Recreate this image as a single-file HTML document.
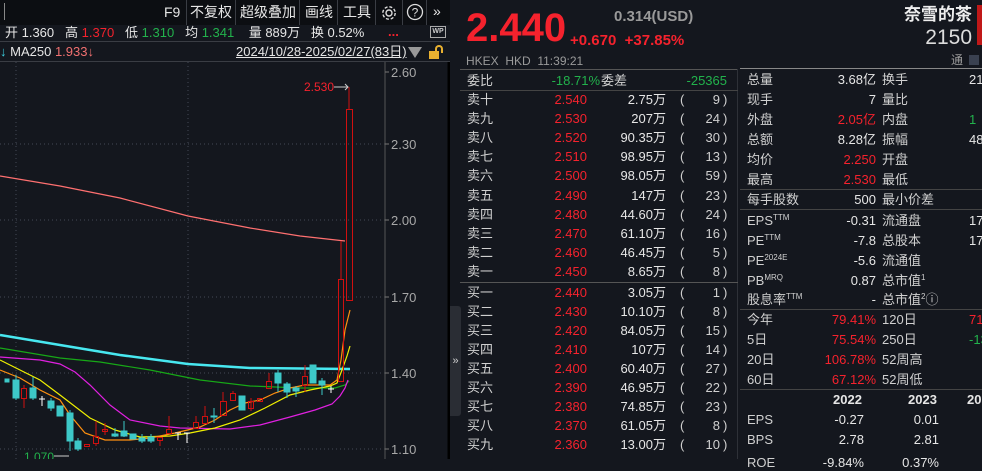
<!DOCTYPE html>
<html><head><meta charset="utf-8"><style>
*{margin:0;padding:0;box-sizing:border-box}
body{width:982px;height:459px;overflow:hidden;background:#14171e;font-family:"Liberation Sans","Noto Sans CJK SC",sans-serif;font-size:13px;color:#d0d0d0;position:relative}
.a{position:absolute;white-space:nowrap;line-height:16px}
.r{color:#f5222d}.g{color:#22b24c}.w{color:#e6e6e6}.gy{color:#9a9a9a}
.hl{position:absolute;height:1px;background:#3a3d44}
.vl{position:absolute;width:1px;background:#3a3d44}
.rt{text-align:right}
.sp{font-size:8px;position:relative;top:-5px;line-height:0}
.tb{font-size:14px}
</style></head><body>
<div class="a" style="left:0;top:0;width:450px;height:25px;background:#0c0e12"></div>
<div class="vl" style="left:4px;top:3px;height:17px;background:#888"></div>
<div class="a w tb" style="left:164px;top:4px">F9</div>
<div class="vl" style="left:186px;top:0;height:25px"></div>
<div class="a w tb" style="left:190px;top:4px">不复权</div>
<div class="vl" style="left:235px;top:0;height:25px"></div>
<div class="a w tb" style="left:240px;top:4px">超级叠加</div>
<div class="vl" style="left:299px;top:0;height:25px"></div>
<div class="a w tb" style="left:305px;top:4px">画线</div>
<div class="vl" style="left:337px;top:0;height:25px"></div>
<div class="a w tb" style="left:343px;top:4px">工具</div>
<div class="vl" style="left:375px;top:0;height:25px"></div>
<svg class="a" style="left:380px;top:4px" width="18" height="18" viewBox="0 0 18 18"><circle cx="9" cy="9" r="3" fill="none" stroke="#ddd" stroke-width="1.4"/><circle cx="9" cy="9" r="6.2" fill="none" stroke="#ddd" stroke-width="1.4" stroke-dasharray="3 1.9"/></svg>
<div class="vl" style="left:402px;top:0;height:25px"></div>
<svg class="a" style="left:406px;top:3px" width="18" height="18" viewBox="0 0 18 18"><circle cx="9" cy="9" r="7.5" fill="none" stroke="#ddd" stroke-width="1.3"/><text x="9" y="13.5" font-size="12" fill="#ddd" text-anchor="middle" font-family="Liberation Sans">?</text></svg>
<div class="vl" style="left:426px;top:0;height:25px"></div>
<div class="a w" style="left:433px;top:3px;font-size:14px">»</div>
<div class="a" style="left:5px;top:25px;font-size:13px"><span class="w">开 1.360</span>&nbsp;&nbsp; <span class="w">高</span> <span class="r">1.370</span>&nbsp;&nbsp; <span class="w">低</span> <span class="g">1.310</span>&nbsp;&nbsp; <span class="w">均</span> <span class="g">1.341</span>&nbsp;&nbsp;&nbsp; <span class="w">量 889万</span>&nbsp;&nbsp; <span class="w">换 0.52%</span></div>
<div class="a r" style="left:388px;top:24px;font-weight:bold">...</div>
<div class="a" style="left:430px;top:26px;width:16px;height:12px;border:1px solid #aaa;font-size:7px;line-height:10px;text-align:center;color:#ccc;font-weight:bold">WP</div>
<div class="hl" style="left:0;top:41px;width:450px"></div>
<div class="a" style="left:0;top:44px"><span style="color:#3cd0e0">↓</span> <span class="w">MA250</span> <span style="color:#f07070">1.933↓</span></div>
<div class="a w" style="left:236px;top:44px;text-decoration:underline">2024/10/28-2025/02/27(83日)</div>
<div class="a" style="left:408px;top:47px;width:0;height:0;border-left:7px solid transparent;border-right:7px solid transparent;border-top:11px solid #999"></div>
<div class="a" style="left:429px;top:51px;width:10px;height:8px;background:#e8b030"></div>
<div class="a" style="left:432px;top:45px;width:8px;height:8px;border:2px solid #e8b030;border-bottom:none;border-radius:4px 4px 0 0;margin-left:3px"></div>
<div class="hl" style="left:0;top:61px;width:450px"></div>
<svg class="a" style="left:0;top:62px" width="450" height="397" viewBox="0 62 450 397">
<g stroke="#444a55" stroke-dasharray="1 3" stroke-width="1">
<line x1="0" y1="144" x2="385" y2="144"/><line x1="0" y1="220" x2="385" y2="220"/><line x1="0" y1="297" x2="385" y2="297"/><line x1="0" y1="373" x2="385" y2="373"/><line x1="0" y1="449" x2="385" y2="449"/>
<line x1="16" y1="62" x2="16" y2="459"/><line x1="188" y1="62" x2="188" y2="459"/>
</g>
<line x1="385" y1="62" x2="385" y2="459" stroke="#555"/>
<g stroke="#777"><line x1="385" y1="72" x2="389" y2="72"/><line x1="385" y1="144" x2="389" y2="144"/><line x1="385" y1="220" x2="389" y2="220"/><line x1="385" y1="297" x2="389" y2="297"/><line x1="385" y1="373" x2="389" y2="373"/><line x1="385" y1="449" x2="389" y2="449"/></g>
<g fill="#a8a8a8" font-size="13" font-family="Liberation Sans"><text x="391" y="77">2.60</text><text x="391" y="149">2.30</text><text x="391" y="225">2.00</text><text x="391" y="302">1.70</text><text x="391" y="378">1.40</text><text x="391" y="454">1.10</text></g>
<line x1="449" y1="62" x2="449" y2="459" stroke="#000" stroke-width="3"/>
<polyline fill="none" stroke="#ff7070" stroke-width="1.2" points="0,176 60,186 120,198 188,216 250,228 300,236 345,241"/>
<polyline fill="none" stroke="#48e8f0" stroke-width="2.5" points="0,335 60,345 120,355 188,364 250,368 350,369"/>
<polyline fill="none" stroke="#17a817" stroke-width="1.2" points="0,348 60,358 100,362 150,370 200,380 250,386 300,388 335,388 345,385 349,381"/>
<polyline fill="none" stroke="#e020e0" stroke-width="1.2" points="0,357 40,360 60,364 75,372 90,385 110,405 130,420 160,426 180,428 230,429 260,425 290,417 315,410 332,404 340,396 345,388 348,380"/>
<polyline fill="none" stroke="#f0f000" stroke-width="1.2" points="0,360 20,370 40,380 60,395 90,418 115,430 140,437 170,436 190,433 215,428 240,420 265,408 290,395 310,390 330,386 337,383 342,370 347,356 350,346"/>
<polyline fill="none" stroke="#ff9010" stroke-width="1.2" points="0,370 20,378 40,390 60,400 70,415 85,433 105,440 130,440 150,438 175,433 200,427 215,420 230,410 245,403 260,400 275,393 290,388 305,385 330,385 337,380 341,360 345,330 350,310"/>
<g stroke-width="1">
<g fill="#3dc8c8" stroke="#3dc8c8">
<rect x="5" y="379" width="4" height="3"/><rect x="13" y="380" width="6" height="18"/><line x1="16" y1="375" x2="16" y2="400"/>
<rect x="30" y="388" width="6" height="10"/><line x1="33" y1="377" x2="33" y2="400"/>
<rect x="48" y="401" width="6" height="7"/><line x1="51" y1="398" x2="51" y2="411"/>
<rect x="57" y="406" width="6" height="10"/>
<rect x="67" y="413" width="6" height="28"/><line x1="70" y1="410" x2="70" y2="451"/>
<rect x="75" y="441" width="6" height="8"/><line x1="78" y1="438" x2="78" y2="451"/>
<rect x="112" y="434" width="6" height="2"/><line x1="115" y1="428" x2="115" y2="437"/>
<rect x="121" y="431" width="6" height="5"/><line x1="124" y1="421" x2="124" y2="437"/>
<rect x="130" y="434" width="6" height="5"/>
<rect x="139" y="438" width="6" height="3"/><line x1="142" y1="434" x2="142" y2="443"/>
<rect x="148" y="437" width="6" height="4"/><line x1="151" y1="434" x2="151" y2="443"/>
<rect x="211" y="416" width="6" height="1"/><line x1="214" y1="408" x2="214" y2="423"/>
<rect x="239" y="396" width="6" height="14"/>
<rect x="275" y="373" width="6" height="10"/><line x1="278" y1="370" x2="278" y2="392"/>
<rect x="284" y="384" width="6" height="8"/><line x1="287" y1="382" x2="287" y2="398"/>
<rect x="293" y="388" width="6" height="3"/><line x1="296" y1="386" x2="296" y2="397"/>
<rect x="310" y="365" width="6" height="18"/>
<rect x="319" y="381" width="6" height="4"/><line x1="322" y1="378" x2="322" y2="395"/>
</g>
<g fill="none" stroke="#d01010">
<rect x="21.5" y="388.5" width="5" height="10"/><line x1="24" y1="385" x2="24" y2="388"/><line x1="24" y1="399" x2="24" y2="408"/>
<rect x="84.5" y="444.5" width="5" height="2"/>
<rect x="93.5" y="436.5" width="5" height="7"/><line x1="96" y1="421" x2="96" y2="436"/><line x1="96" y1="444" x2="96" y2="446"/>
<rect x="102.5" y="429.5" width="5" height="2"/><line x1="105" y1="423" x2="105" y2="435"/>
<rect x="157.5" y="437.5" width="5" height="3"/><line x1="160" y1="440" x2="160" y2="446"/>
<rect x="166.5" y="429.5" width="5" height="4"/><line x1="169" y1="416" x2="169" y2="429"/>
<rect x="193.5" y="422.5" width="5" height="6"/><line x1="196" y1="416" x2="196" y2="422"/>
<rect x="202.5" y="416.5" width="5" height="7"/><line x1="205" y1="406" x2="205" y2="416"/>
<rect x="220.5" y="401.5" width="6" height="14"/><line x1="223" y1="392" x2="223" y2="401"/>
<rect x="230.5" y="393.5" width="5" height="7"/><line x1="233" y1="391" x2="233" y2="393"/>
<rect x="248.5" y="401.5" width="5" height="7"/><line x1="251" y1="398" x2="251" y2="411"/>
<rect x="257.5" y="398.5" width="5" height="3"/>
<rect x="266.5" y="381.5" width="5" height="7"/><line x1="269" y1="373" x2="269" y2="381"/>
<rect x="302.5" y="376.5" width="5" height="9"/><line x1="305" y1="365" x2="305" y2="376"/><line x1="305" y1="386" x2="305" y2="392"/>
<rect x="338.5" y="279.5" width="5" height="102"/><line x1="341" y1="241" x2="341" y2="279"/>
<rect x="346.5" y="109.5" width="6" height="191"/><line x1="349" y1="87" x2="349" y2="109"/>
</g>
<g stroke="#fff"><line x1="39" y1="399" x2="45" y2="399"/><line x1="42" y1="396" x2="42" y2="406"/>
<line x1="175" y1="433" x2="181" y2="433"/><line x1="178" y1="433" x2="178" y2="440"/>
<line x1="184" y1="433" x2="190" y2="433"/><line x1="187" y1="433" x2="187" y2="443"/>
<line x1="328" y1="389" x2="334" y2="389"/><line x1="331" y1="386" x2="331" y2="393"/></g>
</g>
<text x="304" y="91" fill="#f5222d" font-size="12" font-family="Liberation Sans">2.530</text>
<line x1="334" y1="87" x2="348" y2="87" stroke="#ccc"/><polyline points="345,84 348,87 345,90" fill="none" stroke="#ccc"/>
<text x="24" y="461" fill="#22b24c" font-size="12" font-family="Liberation Sans">1.070</text>
<line x1="54" y1="456" x2="69" y2="456" stroke="#ccc"/>
</svg>
<div class="a" style="left:450px;top:306px;width:11px;height:110px;background:#2a2d34;border-radius:0 3px 3px 0;color:#ccc;font-size:11px;line-height:110px;text-align:center">»</div>
<div class="a r" style="left:466px;top:6px;font-size:40px;line-height:44px;font-weight:bold">2.440</div>
<div class="a gy" style="left:614px;top:8px;font-size:15px;line-height:18px;font-weight:bold">0.314(USD)</div>
<div class="a r" style="left:570px;top:32px;font-size:15px;line-height:18px;font-weight:bold">+0.670&nbsp; +37.85%</div>
<div class="a gy" style="left:466px;top:53px;font-size:12px">HKEX&nbsp; HKD&nbsp; 11:39:21</div>
<div class="hl" style="left:460px;top:69px;width:278px;background:#555"></div>
<div class="vl" style="left:737px;top:69px;height:390px;background:#2e3138"></div>
<div class="a" style="left:467px;top:73px">委比</div>
<div class="a g rt" style="left:520px;top:73px;width:80px">-18.71%</div>
<div class="a" style="left:601px;top:73px">委差</div>
<div class="a g rt" style="left:650px;top:73px;width:77px">-25365</div>
<div class="hl" style="left:460px;top:90px;width:278px;background:#444"></div>
<div id="ob"></div>
<div class="hl" style="left:460px;top:282px;width:278px;background:#555"></div>
<div class="a" style="left:850px;top:4px;font-size:17px;line-height:22px;font-weight:bold;color:#eee;width:122px;text-align:right">奈雪的茶</div>
<div class="a" style="left:850px;top:26px;font-size:21px;line-height:24px;color:#ddd;width:122px;text-align:right">2150</div>
<div class="a" style="left:977px;top:5px;width:5px;height:40px;background:#c01818"></div>
<div class="a gy" style="left:951px;top:52px;font-size:12px">通</div>
<div class="a" style="left:969px;top:55px;width:10px;height:10px;background:#3a4150"></div>
<div class="hl" style="left:740px;top:68px;width:242px;background:#888"></div>
<div id="rp"></div>
<script>
var ob=[["卖十","2.540","2.75万","9"],["卖九","2.530","207万","24"],["卖八","2.520","90.35万","30"],["卖七","2.510","98.95万","13"],["卖六","2.500","98.05万","59"],["卖五","2.490","147万","23"],["卖四","2.480","44.60万","24"],["卖三","2.470","61.10万","16"],["卖二","2.460","46.45万","5"],["卖一","2.450","8.65万","8"],
["买一","2.440","3.05万","1"],["买二","2.430","10.10万","8"],["买三","2.420","84.05万","15"],["买四","2.410","107万","14"],["买五","2.400","60.40万","27"],["买六","2.390","46.95万","22"],["买七","2.380","74.85万","23"],["买八","2.370","61.05万","8"],["买九","2.360","13.00万","10"]];
var h="";ob.forEach(function(r,i){var y=i<10?92+i*19.1:285+(i-10)*19;
h+='<div class="a" style="left:467px;top:'+y+'px">'+r[0]+'</div><div class="a r rt" style="left:530px;top:'+y+'px;width:57px">'+r[1]+'</div><div class="a w rt" style="left:600px;top:'+y+'px;width:66px">'+r[2]+'</div><div class="a" style="left:680px;top:'+y+'px">(</div><div class="a rt" style="left:690px;top:'+y+'px;width:30px">'+r[3]+'</div><div class="a" style="left:723px;top:'+y+'px">)</div>';});
document.getElementById("ob").outerHTML=h;
var rp=[["总量","3.68亿","","换手","21",""],["现手","7","","量比","",""],["外盘","2.05亿","r","内盘","1","g"],["总额","8.28亿","","振幅","48",""],["均价","2.250","r","开盘","",""],["最高","2.530","r","最低","",""],
["每手股数","500","","最小价差","",""],
["EPS[TTM]","-0.31","","流通盘","17",""],["PE[TTM]","-7.8","","总股本","17",""],["PE[2024E]","-5.6","","流通值","",""],["PB[MRQ]","0.87","","总市值[1]","",""],["股息率[TTM]","-","","总市值[2]ⓘ","",""],
["今年","79.41%","r","120日","71","r"],["5日","75.54%","r","250日","-13","g"],["20日","106.78%","r","52周高","",""],["60日","67.12%","r","52周低","",""]];
var ys=[72,92,112,132,152,172,192,213,233,253,273,292,312,332,352,372];
function s(t){return t.replace(/\[/g,'<span class="sp">').replace(/\]/g,'</span>');}
h="";rp.forEach(function(r,i){var y=ys[i];
h+='<div class="a" style="left:747px;top:'+y+'px">'+s(r[0])+'</div><div class="a rt '+(r[2]||"w")+'" style="left:790px;top:'+y+'px;width:86px">'+r[1]+'</div><div class="a" style="left:882px;top:'+y+'px">'+s(r[3])+'</div><div class="a '+(r[5]||"w")+'" style="left:969px;top:'+y+'px">'+r[4]+'</div>';});
document.getElementById("rp").outerHTML=h;
</script>
<div class="hl" style="left:740px;top:189px;width:242px;background:#444"></div>
<div class="hl" style="left:740px;top:209px;width:242px;background:#444"></div>
<div class="hl" style="left:740px;top:309px;width:242px;background:#444"></div>
<div class="hl" style="left:740px;top:389px;width:242px;background:#444"></div>
<div class="a w" style="left:833px;top:392px;font-weight:bold">2022</div>
<div class="a w" style="left:908px;top:392px;font-weight:bold">2023</div>
<div class="a w" style="left:967px;top:392px;font-weight:bold">20</div>
<div class="a" style="left:747px;top:412px">EPS</div><div class="a w rt" style="left:800px;top:412px;width:64px">-0.27</div><div class="a w rt" style="left:880px;top:412px;width:59px">0.01</div>
<div class="a" style="left:747px;top:432px">BPS</div><div class="a w rt" style="left:800px;top:432px;width:64px">2.78</div><div class="a w rt" style="left:880px;top:432px;width:59px">2.81</div>
<div class="a" style="left:747px;top:455px">ROE</div><div class="a w rt" style="left:800px;top:455px;width:64px">-9.84%</div><div class="a w rt" style="left:880px;top:455px;width:59px">0.37%</div>
</body></html>
